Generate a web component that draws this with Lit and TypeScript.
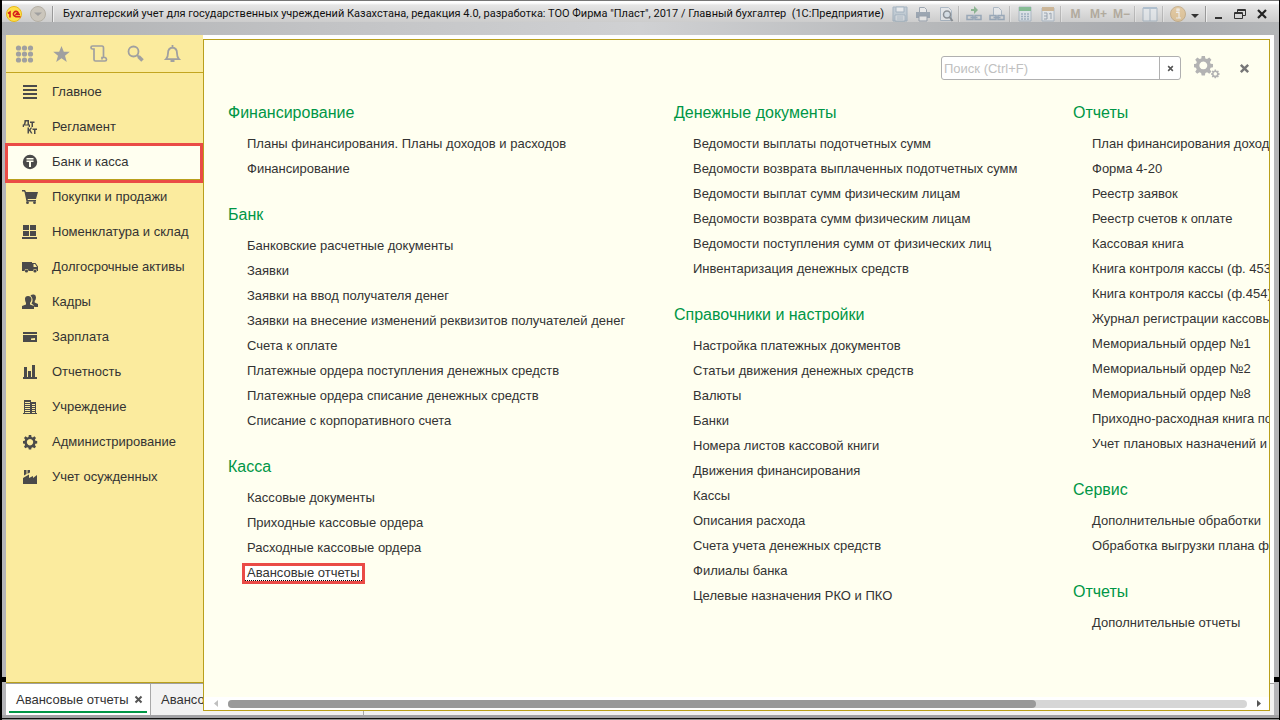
import { LitElement, html, svg, css, nothing } from "lit";
import { customElement, property } from "lit/decorators.js";
import { classMap } from "lit/directives/class-map.js";

const navIcons: Record<string, unknown> = {
  main: svg`<path d="M1 1h14v2H1zM1 5h14v2H1zM1 9h14v2H1zM1 13h14v2H1z"/>`,
  ledger: svg`<path d="M2.500 1H7v4.500h1V8H6.700V6.500H2V8H.7V5.500h.8Q2.500 4 2.500 1zM4 2.500Q3.800 4.500 3.200 5.500h2.300v-3zM8 2.500h4.500V4H11v4H9.500V4H8zM5.500 8.500H7v2.200l1.800-2.200h1.500L8.500 11l2 3.500H9L7.500 12l-.5.500v2H5.500zM10.500 9.500H15V11h-1.500v4H12v-4h-1.500z"/>`,
  bank: svg`<circle cx="8" cy="8" r="7.200"/><path class="cut" d="M4.500 4h7v1.500h-7zM4.500 6.500h7V8H9v5H7V8H4.500z"/>`,
  cart: svg`<path d="M0 1h3l1 2h12l-2 7H5.500l.5 1h8v1.500H4.500L2.500 3 2 2.500H0z"/><circle cx="5.500" cy="13.700" r="1.400"/><circle cx="12.500" cy="13.700" r="1.400"/>`,
  stock: svg`<path d="M1 1h6v5H1zM8 1h6v5H8zM1 7h6v5H1zM8 7h6v5H8zM0 13h15v2H0z"/>`,
  truck: svg`<path d="M0 3h10v9H6.500a2 2 0 0 0-4 0H0zM10 4h3.500L16 7.500V12h-1a2 2 0 0 0-4 0h-1zM11.500 5v3H15l-2-3z" fill-rule="evenodd"/><circle cx="4.500" cy="12" r="1.600"/><circle cx="13" cy="12" r="1.600"/>`,
  people: svg`<path d="M8.500 1.500Q10 0 12 .5q2 .5 2 3 0 2-1.300 3.500v1.500L16 10v3h-3.500l-1.500-2.500-1.500-.8Q11 7.500 10.500 5 10 3 8.500 1.500z"/><path d="M3 5q0-3 3-3t3.500 3q0 2.500-1.500 4v1.500l4 1.500v3H0v-3l4-1.500V9Q3 7.500 3 5z"/>`,
  card: svg`<path d="M1 3h14v2H1zM1 6h14v7H1zM9 9.500v1.500h4V9z" fill-rule="evenodd"/>`,
  chart: svg`<path d="M2 3h3v10h1V7h3v6h1V1h3v12h2v2H1v-2h1z"/>`,
  building: svg`<path d="M2 1h7v2h5v11h1v1H1v-1h1zM3 3v1h5V3zM3 5v1h5V5zM3 7v1h5V7zM3 9v1h5V9zM3 11v1h5v-1zM3 13v1h5v-1zM10 5v1h3V5zM10 7v1h3V7zM10 9v1h3V9zM10 11v1h3v-1zM10 13v1h3v-1z" fill-rule="evenodd"/>`,
  gear: svg`<path d="M6.800 1h2.400l.3 1.900 1.300.5 1.600-1.100 1.600 1.600-1.100 1.600.5 1.300 1.800.3v2.300l-1.800.4-.5 1.300 1.100 1.600-1.600 1.600-1.600-1.100-1.300.5-.3 1.800H6.800l-.4-1.800-1.300-.5-1.600 1.100L2 12.700l1.100-1.600-.5-1.300L1 9.400V7.100l1.700-.3.5-1.300L2 3.900l1.600-1.600 1.600 1.100 1.300-.5zM8 5a3.200 3.200 0 1 0 .01 0z" fill-rule="evenodd"/>`,
  factory: svg`<path d="M1 15V9l6-3.500V9l4-2v2l4-3v9zM2 1h2.500v4L2 6.500zM5.500 1H8v2.500L5.500 4.700z"/>`,
};

const navItems: [string, string][] = [
  ["main", "Главное"], ["ledger", "Регламент"], ["bank", "Банк и касса"],
  ["cart", "Покупки и продажи"], ["stock", "Номенклатура и склад"],
  ["truck", "Долгосрочные активы"], ["people", "Кадры"], ["card", "Зарплата"],
  ["chart", "Отчетность"], ["building", "Учреждение"],
  ["gear", "Администрирование"], ["factory", "Учет осужденных"],
];

interface Section { title: string; items: string[]; }

const columns: Section[][] = [
  [
    { title: "Финансирование", items: ["Планы финансирования. Планы доходов и расходов", "Финансирование"] },
    { title: "Банк", items: ["Банковские расчетные документы", "Заявки", "Заявки на ввод получателя денег", "Заявки на внесение изменений реквизитов получателей денег", "Счета к оплате", "Платежные ордера поступления денежных средств", "Платежные ордера списание денежных средств", "Списание с корпоративного счета"] },
    { title: "Касса", items: ["Кассовые документы", "Приходные кассовые ордера", "Расходные кассовые ордера", "Авансовые отчеты"] },
  ],
  [
    { title: "Денежные документы", items: ["Ведомости выплаты подотчетных сумм", "Ведомости возврата выплаченных подотчетных сумм", "Ведомости выплат сумм физическим лицам", "Ведомости возврата сумм физическим лицам", "Ведомости поступления сумм от физических лиц", "Инвентаризация денежных средств"] },
    { title: "Справочники и настройки", items: ["Настройка платежных документов", "Статьи движения денежных средств", "Валюты", "Банки", "Номера листов кассовой книги", "Движения финансирования", "Кассы", "Описания расхода", "Счета учета денежных средств", "Филиалы банка", "Целевые назначения РКО и ПКО"] },
  ],
  [
    { title: "Отчеты", items: ["План финансирования доходов", "Форма 4-20", "Реестр заявок", "Реестр счетов к оплате", "Кассовая книга", "Книга контроля кассы (ф. 453)", "Книга контроля кассы (ф.454)", "Журнал регистрации кассовых", "Мемориальный ордер №1", "Мемориальный ордер №2", "Мемориальный ордер №8", "Приходно-расходная книга по", "Учет плановых назначений и"] },
    { title: "Сервис", items: ["Дополнительные обработки", "Обработка выгрузки плана финансирования"] },
    { title: "Отчеты", items: ["Дополнительные отчеты"] },
  ],
];

const cross = svg`<path d="M1.500 1.500l6 6M7.500 1.500l-6 6" stroke="currentColor" stroke-width="2" fill="none"/>`;

@customElement("title-bar")
class TitleBar extends LitElement {
  static styles = css`
    :host { display: flex; height: 35px; box-sizing: border-box; padding: 2px 6px 10px 4px; align-items: center; color: #111;
      font: 11px/16px Roboto, sans-serif; white-space: nowrap;
      background:
        linear-gradient(180deg, #777 0 1px, #fff 1px 3px, #e6e6e6 5px, #ccc 22px, transparent 22px),
        linear-gradient(90deg, #aeb0b2, #c2c3c5 25%, #d0d1d3 50%, #b4b6b8 75%, #a9abaf 90%, #b4b6b8); }
    button { border: 0; padding: 0; background: none; color: inherit; display: flex; align-items: center; justify-content: center; font: inherit; }
    .logo { margin-right: 8px; }
    .sep { width: 1px; height: 16px; background: #999; border-right: 1px solid #eee; }
    .first { margin: 0 9px 0 6px; }
    .title { margin: 0; font: inherit; flex: 1; min-width: 0; overflow: hidden; }
    .tools { display: flex; align-items: center; opacity: .5; }
    .tools .sep { margin: 0 2px 0 1px; }
    .tools button { width: 23px; height: 20px; }
    .tools .memory { font: bold 12px/16px "Liberation Sans", sans-serif; color: #8b7c63; }
    .window-buttons { display: flex; }
    .window-buttons button { width: 22px; height: 20px; }
    .more { width: 12px; height: 16px; margin-right: 4px; }
    .more svg { padding-top: 6px; }
  `;
  tool(label: string, body: unknown) {
    return html`<button aria-label=${label}><svg width="16" height="16" viewBox="0 0 16 16">${body}</svg></button>`;
  }
  render() {
    return html`
      <svg class="logo" width="16" height="18" viewBox="0 0 16 18" role="img" aria-label="1С">
        <circle cx="8" cy="9" r="7.500" fill="#ffe04a" stroke="#e8b91a" />
        <path d="M2 8.500 4 7V12.500M12.500 8Q10 5 8 7.500t2 4.300h4.500M13.500 9.500q-2.500-2-3.500 0h4" fill="none" stroke="#d8201c" stroke-width="1.600" />
      </svg>
      <button aria-label="Меню"><svg width="16" height="16"><circle cx="8" cy="8" r="7.500" fill="#cbc6bc" stroke="#b5b0a5"/><path d="M4 6.500h8L8 10z" fill="#a0a0a0"/></svg></button>
      <span class="sep first"></span>
      <h1 class="title">Бухгалтерский учет для государственных учреждений Казахстана, редакция 4.0, разработка: ТОО Фирма "Пласт", 2017 / Главный бухгалтер&nbsp; (1С:Предприятие)</h1>
      <div class="tools">
        ${this.tool("Сохранить", svg`<path d="M1 1h14v14H1z" fill="#a8bccd" stroke="#6f8ba5"/><path d="M4 1h8v5H4zM3 9h10v6H3z" fill="#eef2f6" stroke="#6f8ba5"/><path d="M4.500 11h7M4.500 13h7" stroke="#6f8ba5"/>`)}
        ${this.tool("Печать", svg`<path d="M4.500 1.500h5l2 2V7h-7z" fill="#f4f4f4" stroke="#5d6f84"/><path d="M1 6h14v6H1z" fill="#60758c"/><path d="M4 10h8v5H4z" fill="#f4f4f4" stroke="#5d6f84"/>`)}
        ${this.tool("Просмотр", svg`<path d="M2.500 1.500h8l3 3v10h-11z" fill="#e9eef3" stroke="#7b93ab"/><circle cx="9" cy="8.500" r="3.500" fill="#cfe0ee" stroke="#3f4a55" stroke-width="1.500"/><path d="m11.500 11 3 4" stroke="#3f4a55" stroke-width="2"/>`)}
        <span class="sep"></span>
        ${this.tool("Получить ссылку", svg`<path d="M5 3h3V0l4 4-4 4V5H5z" fill="#3f8d4a"/><path d="M1 9.500h6v4H1zM9 9.500h6v4H9zM4.500 11.500h7" fill="none" stroke="#5d7b9c" stroke-width="1.500"/>`)}
        ${this.tool("Перейти по ссылке", svg`<path d="M4.500 9V1.500h5l3 3V9" fill="#eef2f6" stroke="#7b93ab"/><path d="M1 9.500h6v4H1zM9 9.500h6v4H9zM4.500 11.500h7" fill="none" stroke="#5d7b9c" stroke-width="1.500"/>`)}
        <span class="sep"></span>
        ${this.tool("Калькулятор", svg`<path d="M2 1h12v14H2z" fill="#dbe8f2" stroke="#8199b0"/><path d="M2 1h12v4H2z" fill="#2f9a4b"/><path d="M4 8h2M7 8h2M10 8h2M4 10.500h2M7 10.500h2M10 10.500h2M4 13h2M7 13h2M10 13h2" stroke="#6c8cab" stroke-width="1.500"/>`)}
        ${this.tool("Календарь", svg`<path d="M2 2h12v13H2z" fill="#eaf0f5" stroke="#8199b0"/><path d="M2 1h12v4H2z" fill="#b88d52"/><path d="M4 7h3v6H4M4 10h3M9 8l2-1v6" fill="none" stroke="#60758c"/>`)}
        <span class="sep"></span>
        <button class="memory">M</button><button class="memory">M+</button><button class="memory">M−</button>
        <span class="sep"></span>
        ${this.tool("Окна", svg`<path d="M1 2h14v13H1z" fill="#e6edf3" stroke="#7b93ab"/><path d="M1 1h14v2H1z" fill="#7f9fbd"/><path d="M8 3v12" stroke="#7b93ab" stroke-width="1"/>`)}
        <span class="sep"></span>
        ${this.tool("Справка", svg`<circle cx="8" cy="8" r="7.500" fill="#e3b263" stroke="#b08748"/><path d="M7 3h2v2H7zM6 6.500h3V12M6 12h5" fill="none" stroke="#fff" stroke-width="1.200"/>`)}
      </div>
      <button class="more" aria-label="Ещё"><svg width="8" height="11" viewBox="0 0 8 5"><path d="M0 0h8L4 4z" fill="#333"/></svg></button>
      <span class="sep"></span>
      <div class="window-buttons">
        <button aria-label="Свернуть"><svg width="12" height="12"><path d="M3 9h7v2H3z" fill="#333"/></svg></button>
        <button aria-label="Развернуть"><svg width="12" height="12"><path d="M3.500 4V1.500h8v6H9M.5 4.500h8v6h-8zM.5 5.500h8M3.500 2.500h8" fill="none" stroke="#333"/></svg></button>
        <button aria-label="Закрыть"><svg width="12" height="12"><path d="m2 2 8 8M10 2l-8 8" stroke="#222" stroke-width="2.200"/></svg></button>
      </div>`;
  }
}

@customElement("section-nav")
class SectionNav extends LitElement {
  static styles = css`
    :host { display: block; width: 197px; background: #fbeb9e; border-bottom: 1px solid #b9a01c; font: 13px/15px "Liberation Sans", Arial, sans-serif; }
    .quick { height: 37px; display: flex; align-items: center; gap: 17px; padding-left: 9px; border-bottom: 1px solid #c3a520; color: #a0a0a0; }
    .quick button { width: 20px; height: 20px; border: 0; padding: 0; background: none; color: inherit; display: flex; }
    .list { display: flex; flex-direction: column; padding-top: 1px; }
    .item { height: 35px; display: flex; align-items: center; gap: 14px; padding-left: 16px; color: #333; text-decoration: none; white-space: nowrap; }
    .item svg { fill: #4a4a4a; }
    .cut { fill: #fffff0; }
    .active { background: #fffff0; position: relative; z-index: 3; box-shadow: 0 1px #b9a01c; }
    .active::after { content: ""; position: absolute; inset: -1px 0 -4px -1px; border: 3px solid #ea4b46; }
  `;
  render() {
    return html`
      <div class="quick">
        <button aria-label="Все функции"><svg width="20" height="20" fill="currentColor">${[4, 10, 16].map(y => [4, 10, 16].map(x => svg`<circle cx=${x - 0.5} cy=${y} r="2.600"/>`))}</svg></button>
        <button aria-label="Избранное"><svg width="20" height="20" fill="currentColor"><path d="m9.500 2 2.300 5.800h6l-4.800 4 1.800 6.200-5.300-3.700L4.200 18 6 11.800l-4.800-4h6z"/></svg></button>
        <button aria-label="История"><svg width="20" height="20" fill="none" stroke="currentColor" stroke-width="1.700"><path d="M5 7V5H3.500Q2 5 2 3.500T3.500 2H13q1.500 0 1.500 2v9M5 6v9.500Q5 17 6.500 17H16q1.500 0 1.500-1.500T16 13.500h-3v2"/></svg></button>
        <button aria-label="Поиск"><svg width="20" height="20" fill="none" stroke="currentColor"><circle cx="7.500" cy="7.500" r="5" stroke-width="1.800"/><path d="m11 11 2 2" stroke-width="1.800"/><path d="m12.500 12.500 4 4" stroke-width="3.500"/></svg></button>
        <button aria-label="Уведомления"><svg width="20" height="20" fill="none" stroke="currentColor" stroke-width="1.800"><path d="M3 15.200q2-2 2-6Q5 4 9.500 3.500 14 4 14 9.200q0 4 2 6zM9.500 1v2.500"/><path d="M7.500 16h4v2h-4z" fill="currentColor" stroke="none"/></svg></button>
      </div>
      <nav class="list">
        ${navItems.map(([icon, label]) => html`<a href="#" class=${classMap({ item: true, active: icon === "bank" })}><svg width="16" height="16" viewBox="0 0 16 16">${navIcons[icon]}</svg>${label}</a>`)}
      </nav>`;
  }
}

@customElement("function-menu")
class FunctionMenu extends LitElement {
  static styles = css`
    :host { display: flex; flex-direction: column; box-sizing: border-box; background: #fffff0; border: 1px solid #b9a01c; overflow: hidden; font: 13px/15px "Liberation Sans", Arial, sans-serif; color: #333; }
    .bar { display: flex; align-items: center; justify-content: flex-end; padding: 16px 19px 0 0; }
    .search { display: flex; width: 240px; height: 24px; box-sizing: border-box; border: 1px solid #b0b0b0; border-radius: 3px; background: #fff; overflow: hidden; }
    .search input { flex: 1; min-width: 0; border: 0; padding: 2px 2px 0; outline: 0; background: none; font: 13px/20px "Liberation Sans", Arial, sans-serif; }
    .search input::placeholder { color: #c0c0c0; opacity: 1; }
    button { border: 0; padding: 0; background: none; display: flex; align-items: center; justify-content: center; color: #555; }
    .search button { width: 21px; border-left: 1px solid #b0b0b0; }
    .gears { margin: 0 19px 0 13px; }
    .close { width: 11px; height: 11px; color: #777; }
    .columns { flex: 1; min-height: 0; display: grid; grid-template-columns: 446px 399px max-content; padding: 23px 0 0 24px; overflow: hidden; }
    .column { display: flex; flex-direction: column; gap: 24px; }
    .title { margin: 0 0 8px; font: 16px/20px "Liberation Sans", Arial, sans-serif; color: #009646; }
    .list { list-style: none; margin: 0; padding: 0 0 0 19px; }
    .row { height: 25px; display: flex; align-items: center; white-space: nowrap; }
    .row a { color: inherit; text-decoration: none; }
    .row .focused { outline: 3px solid #ea4b46; background: #fff; border-bottom: 1px dotted #000; padding: 0 2px; margin: 1px 0 0 -2px; line-height: 14px; }
    .scroll { height: 13px; display: flex; align-items: center; background: #fff; gap: 9px; padding: 0 7px 0 9px; }
    .track { flex: 1; height: 8px; border-radius: 4px; background: #d6d6d6; }
    .thumb { width: 79.300%; height: 8px; border-radius: 4px; background: #999; }
  `;
  render() {
    return html`
      <div class="bar">
        <div class="search">
          <input type="text" aria-label="Поиск" placeholder="Поиск (Ctrl+F)" />
          <button aria-label="Очистить"><svg width="7" height="7" viewBox="0 0 9 9">${cross}</svg></button>
        </div>
        <button class="gears" aria-label="Настройка"><svg width="26" height="24" fill="#b3b3b3" fill-rule="evenodd">
          <path transform="translate(-1.500 -1.500) scale(1.350)" d="M6.800 1h2.400l.3 1.900 1.300.5 1.600-1.100 1.600 1.600-1.100 1.600.5 1.300 1.800.3v2.300l-1.800.4-.5 1.300 1.100 1.600-1.600 1.600-1.600-1.100-1.300.5-.3 1.800H6.800l-.4-1.800-1.300-.5-1.600 1.100L2 12.700l1.100-1.600-.5-1.300L1 9.400V7.100l1.700-.3.5-1.300L2 3.900l1.600-1.600 1.600 1.100 1.300-.5zM8 5.200a2.900 2.900 0 1 0 .01 0z"/>
          <path transform="translate(16.500 13) scale(.6)" d="M6.800 1h2.400l.3 1.900 1.300.5 1.600-1.100 1.600 1.600-1.100 1.600.5 1.300 1.800.3v2.300l-1.800.4-.5 1.300 1.100 1.600-1.600 1.600-1.600-1.100-1.300.5-.3 1.800H6.800l-.4-1.800-1.300-.5-1.600 1.100L2 12.700l1.100-1.600-.5-1.300L1 9.400V7.100l1.700-.3.5-1.300L2 3.900l1.600-1.600 1.600 1.100 1.300-.5zM8 5.200a2.900 2.900 0 1 0 .01 0z"/>
        </svg></button>
        <button class="close" aria-label="Закрыть"><svg width="11" height="11" viewBox="0 0 9 9">${cross}</svg></button>
      </div>
      <div class="columns">
        ${columns.map(sections => html`<div class="column">
          ${sections.map(s => html`<section>
            <h2 class="title">${s.title}</h2>
            <ul class="list">${s.items.map(t => html`<li class="row"><a href="#" class=${classMap({ focused: t === "Авансовые отчеты" })}>${t}</a></li>`)}</ul>
          </section>`)}
        </div>`)}
      </div>
      <div class="scroll">
        <svg width="6" height="7"><path d="M5 0v7L1 3.500z" fill="#c0c0c0"/></svg>
        <div class="track"><div class="thumb"></div></div>
        <svg width="6" height="7"><path d="M1 0v7l4-3.500z" fill="#555"/></svg>
      </div>`;
  }
}

@customElement("page-tab")
class PageTab extends LitElement {
  @property() label = "";
  @property({ type: Boolean, reflect: true }) current = false;
  static styles = css`
    :host { display: flex; box-sizing: border-box; border-right: 1px solid #a8a8a8; padding: 0 3px; font: 13px/15px "Liberation Sans", Arial, sans-serif; color: #333; white-space: nowrap; }
    :host([current]) { background: #fff; }
    .tab { flex: 1; display: flex; align-items: center; gap: 5px; padding: 4px 3px 0 7px; margin-bottom: 2px; border-bottom: 2px solid transparent; }
    .on { border-color: #009646; }
    button { border: 0; padding: 0; background: none; display: flex; color: #555; }
    a { color: inherit; text-decoration: none; }
  `;
  render() {
    return html`<div class=${classMap({ tab: true, on: this.current })}><a href="#">${this.label}</a>${this.current ? html`<button aria-label="Закрыть вкладку"><svg width="9" height="9">${cross}</svg></button>` : nothing}</div>`;
  }
}

@customElement("app-root")
class AppRoot extends LitElement {
  static styles = css`
    :host { display: flex; flex-direction: column; height: 100vh; box-sizing: border-box; overflow: hidden; position: relative; background: #b4b4b8; border: solid #000; border-width: 0 1px 0 2px; }
    .client { flex: 1; min-height: 0; display: flex; flex-direction: column; position: relative; margin: 0 5px 0 4px; background: #fff; }
    .body { flex: 1; min-height: 0; display: flex; border-bottom: 1px solid #a0a0a0; }
    .tabs { height: 31px; display: flex; background: #f2f2f2; }
    .tab-one { width: 145px; }
    .tab-two { width: 213px; }
    .menu { position: absolute; inset: 4px 4px 4px 197px; z-index: 2; }
    .edge { height: 5px; background: linear-gradient(180deg, #a2a2a5 0 3px, #111 3px 4px, #8c8c8c 4px); }
    .notch { position: absolute; bottom: 38px; width: 6px; height: 5px; background: #000; }
    .left { left: -2px; }
    .right { right: -1px; }
  `;
  render() {
    return html`
      <title-bar></title-bar>
      <div class="client">
        <div class="body"><section-nav></section-nav></div>
        <div class="tabs">
          <page-tab class="tab-one" label="Авансовые отчеты" current></page-tab>
          <page-tab class="tab-two" label="Авансовый отчет"></page-tab>
        </div>
        <function-menu class="menu"></function-menu>
      </div>
      <div class="edge"></div>
      <span class="notch left"></span><span class="notch right"></span>`;
  }
}
